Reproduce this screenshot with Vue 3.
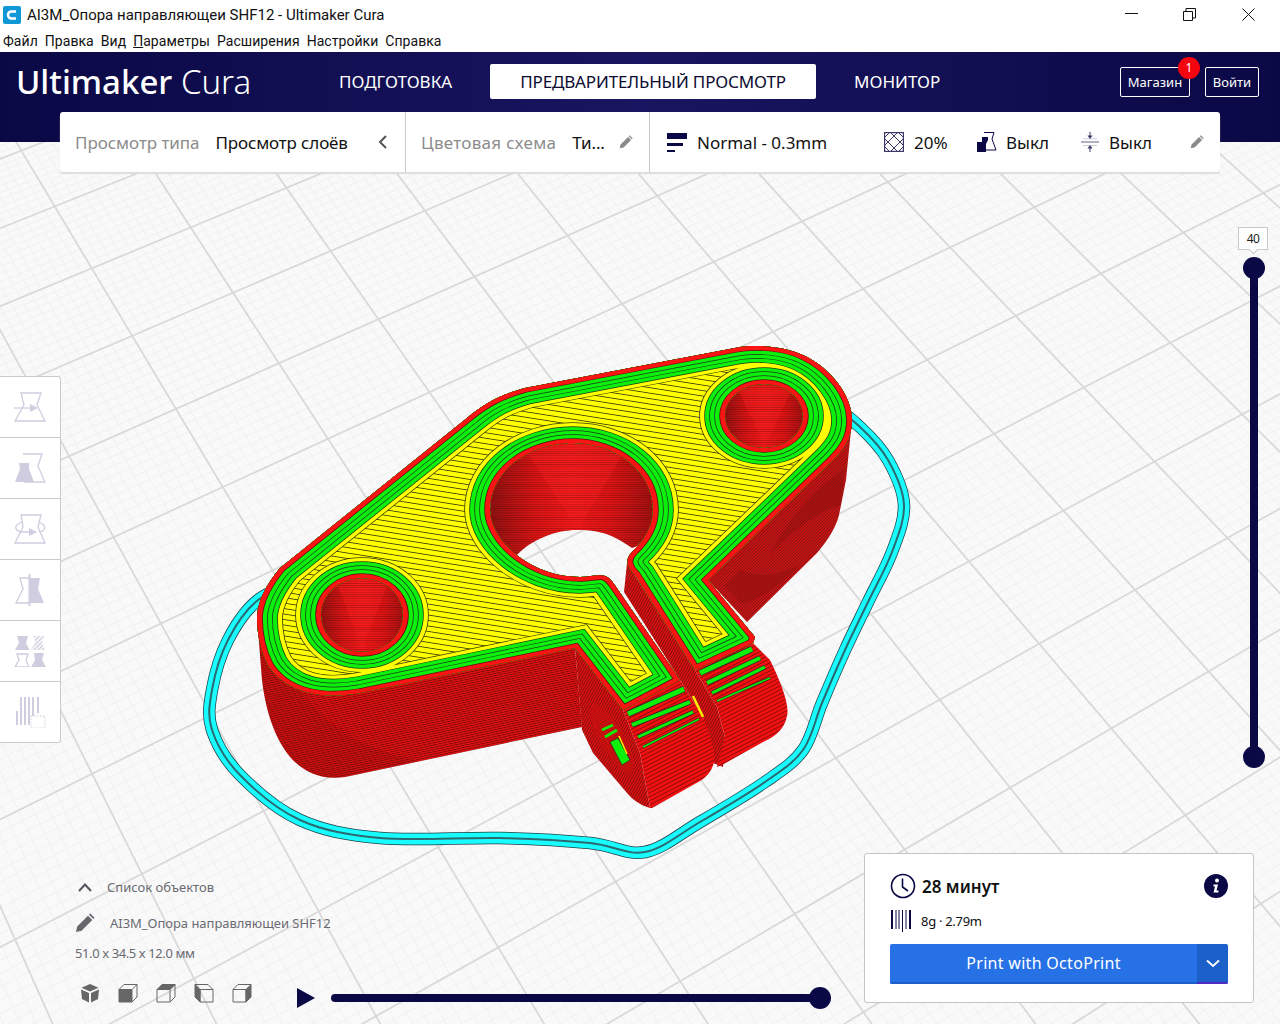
<template>
  <div class="page">
    <div class="titlebar">
      <svg class="app-icon" width="18" height="18" viewBox="0 0 18 18">
        <rect width="18" height="18" rx="2" fill="#0f97d6" />
        <path d="M13 5.500H8.500a3.500 3.500 0 0 0 0 7H13" fill="none" stroke="#fff" stroke-width="2.600" />
      </svg>
      <span class="title-text">AI3M_Опора направляющеи SHF12 - Ultimaker Cura</span>
      <div class="win-controls">
        <svg width="160" height="30" viewBox="0 0 160 30" fill="none" stroke="#111" stroke-width="1">
          <path d="M5 13.500H18" />
          <path d="M63.500 11.500h9v9h-9zM66 11V8.500h9.500V18H73" />
          <path d="M122.500 8.500l12 12M134.500 8.500l-12 12" />
        </svg>
      </div>
    </div>
    <div class="menubar">
      <span>Файл</span><span>Правка</span><span>Вид</span><span><u>П</u>араметры</span><span>Расширения</span><span>Настройки</span><span>Справка</span>
    </div>

    <div class="header">
      <div class="logo"><b>Ultimaker</b> <i>Cura</i></div>
      <nav class="nav">
        <span class="nav-item">ПОДГОТОВКА</span>
        <span class="nav-item active">ПРЕДВАРИТЕЛЬНЫЙ ПРОСМОТР</span>
        <span class="nav-item">МОНИТОР</span>
      </nav>
      <div class="header-btns">
        <span class="hbtn shop">Магазин<em class="badge">1</em></span>
        <span class="hbtn login">Войти</span>
      </div>
    </div>

    <div class="viewport">
      <svg class="scene" width="1280" height="882" viewBox="0 142 1280 882">
        <defs>
          <pattern id="hatch" width="24" height="5.400" patternUnits="userSpaceOnUse" patternTransform="rotate(9)">
            <rect width="24" height="5.400" fill="#ffff00" />
            <rect width="24" height="0.9" fill="#4a4a08" />
          </pattern>
          <pattern id="wallA" width="8" height="2.200" patternUnits="userSpaceOnUse" patternTransform="rotate(-12)">
            <rect width="8" height="2.200" fill="#e41010" />
            <rect width="8" height="0.9" fill="#800c0c" />
          </pattern>
          <pattern id="wallB" width="8" height="2.200" patternUnits="userSpaceOnUse" patternTransform="rotate(-44)">
            <rect width="8" height="2.200" fill="#c81414" />
            <rect width="8" height="0.7" fill="#801010" />
          </pattern>
          <pattern id="wallC" width="8" height="3.600" patternUnits="userSpaceOnUse" patternTransform="rotate(-27)">
            <rect width="8" height="3.600" fill="#f41010" />
            <rect width="8" height="0.9" fill="#8a0c0c" />
          </pattern>
          <pattern id="wallD" width="8" height="2.400" patternUnits="userSpaceOnUse" patternTransform="rotate(-60)">
            <rect width="8" height="2.400" fill="#d81212" />
            <rect width="8" height="0.8" fill="#800c0c" />
          </pattern>
          <pattern id="holeLines" width="8" height="2.200" patternUnits="userSpaceOnUse">
            <rect width="8" height="0.8" fill="#500808" opacity="0.4" />
          </pattern>
          <pattern id="toolHatch" width="3" height="3" patternUnits="userSpaceOnUse" patternTransform="rotate(-45)">
            <rect width="3" height="1.500" fill="#cfcddf" />
          </pattern>
          <linearGradient id="holeShade" x1="0" y1="0" x2="1" y2="0">
            <stop offset="0" stop-color="#8e1010" />
            <stop offset="0.28" stop-color="#dc1414" />
            <stop offset="0.5" stop-color="#f81a1a" />
            <stop offset="0.74" stop-color="#e01414" />
            <stop offset="1" stop-color="#a01010" />
          </linearGradient>
          <clipPath id="faceClip">
            <path :d="facePath" clip-rule="evenodd" />
          </clipPath>
        </defs>

        <!-- build plate -->
        <g fill="none">
          <path :d="gridMinor" stroke="#f1f1f1" stroke-width="1" />
          <path :d="gridMajor" stroke="#d9d9d9" stroke-width="1.800" />
        </g>

        <!-- skirt -->
        <g fill="none">
          <path :d="skirtPath" stroke="#1d3f45" stroke-width="12.500" />
          <path :d="skirtPath" stroke="#18fcff" stroke-width="11" />
          <path :d="skirtPath" stroke="#2a6a70" stroke-width="2" />
        </g>

        <!-- walls -->
        <path d="M708 580L852 420L846 480L840 510C838 525 828 540 817 553L747 622Z" fill="url(#wallB)" />
        <path d="M845 468L841 505C825 510 800 522 770 555C790 515 820 485 845 468ZM800 565C780 585 760 600 742 604L724 586L740 570C760 578 780 575 800 565Z" fill="#7a0c0c" opacity="0.3" />
        <path d="M257 617L262 680C268 730 290 785 345 777L582 727L575 648L360 693C320 700 285 690 262 650Z" fill="url(#wallA)" />
        <path d="M257 617L262 680C268 730 290 785 345 777L420 761C360 750 300 720 262 620Z" fill="#7a0c0c" opacity="0.18" />
        <path d="M627 563L624 592L642 620L680 680L703 717L713 763L723 767L725 737L717 707L695 670Z" fill="url(#wallD)" />
        <path d="M575 648L623 710L640 753L650 808C640 805 633 800 627 793L593 753L582 730Z" fill="url(#wallD)" />
        <path d="M623 710L680 680L703 717C710 735 716 752 714 762C712 772 705 778 700 781L652 808L650 808L640 753Z" fill="url(#wallC)" />
        <path d="M695 670L753 643L770 660C780 680 790 705 787 716C785 728 775 737 765 741L722 765L717 767L725 737L717 707Z" fill="url(#wallC)" />
        <path d="M693 696L703 717" stroke="#ffee00" stroke-width="2.500" />
        <path v-for="s in jawStripes" :key="s.d" :d="s.d" fill="none" stroke="#2a2a2a" :stroke-width="s.w + 1.400" />
        <path v-for="s in jawStripes" :key="'g' + s.d" :d="s.d" fill="none" stroke="#0cf00c" :stroke-width="s.w" />

        <!-- cross hole in the left jaw -->
        <ellipse cx="612" cy="739" rx="12" ry="39" transform="rotate(-30 612 739)" fill="#d81010" />
        <ellipse cx="612" cy="739" rx="12" ry="39" transform="rotate(-30 612 739)" fill="url(#holeLines)" />
        <path d="M602 730L613 725M605 737L617 730" stroke="#0cf00c" stroke-width="3" />
        <path d="M610 742L618 738L630 760L622 765Z" fill="#0cf00c" stroke="#222" stroke-width="0.700" />
        <path d="M619 736L627 754" stroke="#ffee00" stroke-width="1.500" />

        <!-- hole walls -->
        <path :d="mainHoleWall" fill="url(#holeShade)" />
        <path d="M520 442H630L578 530Z" fill="#ff2020" opacity="0.5" />
        <path :d="mainHoleWall" fill="url(#holeLines)" />
        <ellipse cx="362" cy="617" rx="44" ry="40" fill="url(#holeShade)" />
        <path d="M335 578H390L362 650Z" fill="#ff2020" opacity="0.5" />
        <ellipse cx="362" cy="617" rx="44" ry="40" fill="url(#holeLines)" />
        <ellipse cx="764" cy="416" rx="41" ry="34" fill="url(#holeShade)" />
        <path d="M735 383H795L765 446Z" fill="#ff2020" opacity="0.5" />
        <ellipse cx="764" cy="416" rx="41" ry="34" fill="url(#holeLines)" />

        <!-- top layer -->
        <path :d="facePath" fill="url(#hatch)" fill-rule="evenodd" />
        <g clip-path="url(#faceClip)">
          <g transform="scale(1 0.8)">
            <path v-for="l in perimeters" :key="l.w" :d="faceStretched" fill="none" :stroke="l.c" :stroke-width="l.w" stroke-linejoin="miter" />
          </g>
        </g>
      </svg>

      <!-- tool column -->
      <div class="tools">
        <div class="tool">
          <svg width="32" height="32" viewBox="0 0 32 32" fill="none" stroke="#cfcddf" stroke-width="1.300">
            <path d="M7 2H27L23 14L31 30H1L10 14Z" />
            <path d="M0 17H18" />
            <path d="M16 13L24 17L16 21Z" fill="#cfcddf" stroke="none" />
          </svg>
        </div>
        <div class="tool">
          <svg width="32" height="32" viewBox="0 0 32 32" fill="none" stroke="#cfcddf" stroke-width="1.300">
            <path d="M9 2H28L24 14L31 30H10" />
            <path d="M5 11H15L15 17L20 30H1L6 17Z" fill="#cfcddf" stroke="none" />
          </svg>
        </div>
        <div class="tool">
          <svg width="32" height="32" viewBox="0 0 32 32" fill="none" stroke="#cfcddf" stroke-width="1.300">
            <path d="M7 2H27L24 14L31 30H1L9 14Z" />
            <path d="M8 9C-2 13 1 19 10 19H16M25 9C34 13 31 18 25 19" />
            <path d="M15 15L23 19L15 23Z" fill="#cfcddf" stroke="none" />
          </svg>
        </div>
        <div class="tool">
          <svg width="32" height="32" viewBox="0 0 32 32" fill="none" stroke="#cfcddf" stroke-width="1.300">
            <path d="M16 4H6L9 15L2 29H16" />
            <path d="M16 4H26L24 15L30 29H16Z" fill="#cfcddf" stroke="none" />
            <path d="M15.500 0V32" stroke-width="2" />
          </svg>
        </div>
        <div class="tool">
          <svg width="32" height="32" viewBox="0 0 32 32" fill="none" stroke="#cfcddf" stroke-width="1">
            <path d="M3 1H14L12 8L15.500 15H1L5 8Z" fill="#cfcddf" stroke="none" />
            <path d="M20 1H30L28 8L31 15H17L21 8Z" fill="url(#toolHatch)" stroke="none" />
            <path d="M3 19H14L12 25L15 32H1L5 25Z" stroke-width="1.300" />
            <path d="M20 18H30L28 25L32 32H17L21 25Z" fill="#cfcddf" stroke="none" />
          </svg>
        </div>
        <div class="tool">
          <svg width="32" height="32" viewBox="0 0 32 32" fill="none" stroke="#cfcddf" stroke-width="2">
            <path d="M3 29V15M7 29V1M11 29V1M15 29V1M19 29V1M24 17V1" />
            <rect x="17" y="20" width="14" height="12" fill="#fff" stroke-width="1" stroke-dasharray="1.500 1.500" />
          </svg>
        </div>
      </div>

      <!-- layer slider -->
      <div class="layer-slider">
        <div class="layer-label">40</div>
        <div class="layer-track">
          <span class="knob top"></span>
          <span class="knob bottom"></span>
        </div>
      </div>

      <!-- object info -->
      <div class="objects">
        <div class="obj-row list">
          <svg width="16" height="10" viewBox="0 0 16 10" fill="none" stroke="#55555f" stroke-width="2">
            <path d="M2 9L8 2.500L14 9" />
          </svg>
          <span>Список объектов</span>
        </div>
        <div class="obj-row name">
          <svg width="20" height="20" viewBox="0 0 20 20" fill="#66666c">
            <path d="M1 19l1.200-5.500L13 2.700l4.300 4.300L6.500 17.800zM14 1.700l1.300-1.200 4.200 4.200-1.200 1.300z" />
          </svg>
          <span>AI3M_Опора направляющеи SHF12</span>
        </div>
        <div class="dims">51.0 x 34.5 x 12.0 мм</div>
        <div class="view-cubes">
          <svg width="20" height="20" viewBox="0 0 20 20" fill="#666">
            <path d="M10 1L18.500 4.800L10 8.500L1.500 4.800ZM1 6.500L9 10V19.500L2 16ZM19 6.500L11 10V19.500L18 16Z" />
          </svg>
          <svg width="20" height="20" viewBox="0 0 20 20" fill="none" stroke="#666">
            <path d="M1 6.500H14V19H1Z" fill="#666" />
            <path d="M1 6.500L6 1.500H19V14L14 19M14 6.500L19 1.500" />
          </svg>
          <svg width="20" height="20" viewBox="0 0 20 20" fill="none" stroke="#666">
            <path d="M1 6.500L6 1.500H19L14 6.500Z" fill="#666" />
            <path d="M1 6.500H14V19H1ZM14 6.500L19 1.500V14L14 19" />
          </svg>
          <svg width="20" height="20" viewBox="0 0 20 20" fill="none" stroke="#666">
            <path d="M1 1.500L6 6.500V19L1 14Z" fill="#666" />
            <path d="M1 1.500H14L19 6.500V19H6V6.500H19" />
          </svg>
          <svg width="20" height="20" viewBox="0 0 20 20" fill="none" stroke="#666">
            <path d="M14 6.500L19 1.500V14L14 19Z" fill="#666" />
            <path d="M1 6.500H14V19H1ZM1 6.500L6 1.500H19" />
          </svg>
        </div>
      </div>

      <!-- simulation slider -->
      <div class="sim">
        <svg width="18" height="20" viewBox="0 0 18 20"><path d="M0 0L18 10L0 20Z" fill="#0a0845" /></svg>
        <div class="sim-track"><span class="sim-knob"></span></div>
      </div>

      <!-- print panel -->
      <div class="print-panel">
        <div class="panel-top">
          <svg width="26" height="26" viewBox="0 0 26 26" fill="none" stroke="#0a0845" stroke-width="1.600">
            <circle cx="13" cy="13" r="11.500" />
            <path d="M12.500 5.500V14L18 18" />
          </svg>
          <span class="time">28 минут</span>
          <svg class="info" width="24" height="24" viewBox="0 0 24 24">
            <circle cx="12" cy="12" r="12" fill="#0a0845" />
            <circle cx="13" cy="6.500" r="2" fill="#fff" />
            <path d="M9.500 10.500H14L12.500 16.500H14.500V18.500H9.500L11 12.500H9.500Z" fill="#fff" />
          </svg>
        </div>
        <div class="panel-mat">
          <svg width="21" height="23" viewBox="0 0 21 23" stroke="#0a0845" fill="none">
            <path d="M2 1V20M20 1V20" stroke-width="2" />
            <path d="M6 1V20M9 1V20M12.500 1V23M16 1V20" stroke-width="1" />
          </svg>
          <span>8g · 2.79m</span>
        </div>
        <div class="print-btn">
          <span class="print-main">Print with OctoPrint</span>
          <span class="print-more">
            <svg width="14" height="9" viewBox="0 0 14 9" fill="none" stroke="#fff" stroke-width="2">
              <path d="M1 1.500L7 7L13 1.500" />
            </svg>
          </span>
        </div>
      </div>
    </div>

    <!-- top toolbar -->
    <div class="toolbar">
      <div class="tb-sec first">
        <span class="tb-label">Просмотр типа</span>
        <span class="tb-value">Просмотр слоёв</span>
        <svg class="tb-chevron" width="10" height="14" viewBox="0 0 10 14" fill="none" stroke="#555" stroke-width="2">
          <path d="M8 1L2 7L8 13" />
        </svg>
      </div>
      <div class="tb-sec second">
        <span class="tb-label wide">Цветовая схема</span>
        <span class="tb-value">Ти...</span>
        <svg class="tb-pencil" width="14" height="14" viewBox="0 0 20 20" fill="#8a8a8a">
          <path d="M1 19l1.200-5.500L13 2.700l4.300 4.300L6.500 17.800zM14 1.700l1.300-1.200 4.200 4.200-1.200 1.300z" />
        </svg>
      </div>
      <div class="tb-sec third">
        <div class="tb-item profile">
          <svg width="20" height="20" viewBox="0 0 20 20" fill="#0a0845">
            <path d="M0 1H20V7H0ZM0 11H16V14H0ZM0 18H8V20H0Z" />
          </svg>
          <span>Normal - 0.3mm</span>
        </div>
        <div class="tb-item infill">
          <svg width="20" height="20" viewBox="0 0 20 20" fill="none" stroke="#3a3a6a" stroke-width="1">
            <rect x="0.500" y="0.500" width="19" height="19" stroke-width="1.400" />
            <path d="M0 6L6 0M0 14L14 0M6 20L20 6M14 20L20 14M0 6L14 20M0 14L6 20M6 0L20 14M14 0L20 6" />
          </svg>
          <span>20%</span>
        </div>
        <div class="tb-item support">
          <svg width="20" height="20" viewBox="0 0 20 20" fill="none" stroke="#0a0845" stroke-width="1">
            <path d="M7 0.500H17L15 7L19 18H9" />
            <path d="M0 10H5V5H11V8L9 12V20H0Z" fill="#0a0845" stroke="none" />
          </svg>
          <span>Выкл</span>
        </div>
        <div class="tb-item adhesion">
          <svg width="18" height="20" viewBox="0 0 18 20" fill="#3a3a6a">
            <path d="M0 9.500H18V10.500H0Z" opacity="0.8" />
            <path d="M2 6.500H16V7.200H2ZM2 13H16V13.700H2Z" opacity="0.35" />
            <path d="M9 7L6.500 3.500H8.500V0H9.500V3.500H11.500ZM9 13L6.500 16.500H8.500V20H9.500V16.500H11.500Z" />
          </svg>
          <span>Выкл</span>
        </div>
        <svg class="tb-pencil last" width="14" height="14" viewBox="0 0 20 20" fill="#8a8a8a">
          <path d="M1 19l1.200-5.500L13 2.700l4.300 4.300L6.500 17.800zM14 1.700l1.300-1.200 4.200 4.200-1.200 1.300z" />
        </svg>
      </div>
    </div>
  </div>
</template>

<script setup>
// plate grid, two families of lines running to their vanishing points
const VA = [-1389, -2205]
const VB = [6220, -2265]

function lineA(x860) {
  const s = (x860 - VA[0]) / (860 - VA[1])
  return `M${(x860 + s * (100 - 860)).toFixed(1)} 100L${(x860 + s * (1100 - 860)).toFixed(1)} 1100`
}
function lineB(k) {
  const y = 487 + 103 * k + 4 * k * k
  const s = (y - VB[1]) / (223 - VB[0])
  return `M-50 ${(y + s * (-50 - 223)).toFixed(1)}L1330 ${(y + s * (1330 - 223)).toFixed(1)}`
}

let major = ''
let minor = ''
for (let i = -120; i <= 130; i++) {
  const d = lineA(135 + 15.55 * i)
  if (i % 10 === 0) major += d
  else minor += d
}
for (let i = -70; i <= 110; i++) {
  const d = lineB(i / 10)
  if (i % 10 === 0) major += d
  else minor += d
}
const gridMajor = major
const gridMinor = minor

function smooth(pts) {
  const n = pts.length
  let d = `M${pts[0][0]} ${pts[0][1]}`
  for (let i = 0; i < n; i++) {
    const p0 = pts[(i - 1 + n) % n]
    const p1 = pts[i]
    const p2 = pts[(i + 1) % n]
    const p3 = pts[(i + 2) % n]
    d += `C${p1[0] + (p2[0] - p0[0]) / 6} ${p1[1] + (p2[1] - p0[1]) / 6} ${p2[0] - (p3[0] - p1[0]) / 6} ${p2[1] - (p3[1] - p1[1]) / 6} ${p2[0]} ${p2[1]}`
  }
  return d + 'Z'
}

const skirtPath = smooth([
  [800, 410], [832, 408], [860, 427], [888, 460], [904, 505], [892, 552], [868, 602], [845, 650],
  [822, 703], [803, 750], [765, 782], [700, 822], [645, 852], [590, 843], [500, 838], [380, 838],
  [300, 820], [240, 775], [212, 730], [212, 690], [228, 640], [258, 600], [310, 575], [500, 480]
])

function ell(cx, cy, rx, ry) {
  const k = 0.5523
  return `M${cx - rx} ${cy}C${cx - rx} ${cy - ry * k} ${cx - rx * k} ${cy - ry} ${cx} ${cy - ry}` +
    `C${cx + rx * k} ${cy - ry} ${cx + rx} ${cy - ry * k} ${cx + rx} ${cy}` +
    `C${cx + rx} ${cy + ry * k} ${cx + rx * k} ${cy + ry} ${cx} ${cy + ry}` +
    `C${cx - rx * k} ${cy + ry} ${cx - rx} ${cy + ry * k} ${cx - rx} ${cy}Z`
}

const outline =
  'M257 617C258 600 266 585 280 568L467 418C485 403 500 395 525 388L735 348C755 344 785 346 805 356' +
  'C830 368 852 395 852 420C852 437 845 448 833 460L708 580L755 637L753 643L695 670L635 575' +
  'C625 565 626 558 632 552C645 540 653 525 653 510C653 470 615 443 573 443C530 443 490 470 490 510' +
  'C490 540 530 577 580 577C590 577 600 574 605 576C610 578 612 581 614 584L680 680L623 710L575 648' +
  'L360 693C320 700 285 692 268 665C260 650 257 632 257 617Z'

const facePath = outline + ell(362, 615, 41, 37) + ell(764, 416, 39, 32)
const faceStretched = facePath.replace(/(-?[\d.]+) (-?[\d.]+)/g, (m, x, y) => `${x} ${(y / 0.8).toFixed(2)}`)

const mainHoleWall = 'M488 510C488 470 530 441 573 441C615 441 655 470 655 510C655 530 645 545 632 548C610 532 595 530 577 530C555 530 530 540 515 557C500 545 488 530 488 510Z'

// inside lines of the wall, widest first because each one is half hidden by the clip
const perimeters = [
  { w: 51.6, c: '#3a3a08' },
  { w: 50, c: '#ffff00' },
  { w: 41.6, c: '#1c3a1c' },
  { w: 40, c: '#0cf00c' },
  { w: 31.6, c: '#1c3a1c' },
  { w: 30, c: '#0cf00c' },
  { w: 21.6, c: '#1c3a1c' },
  { w: 20, c: '#0cf00c' },
  { w: 11.6, c: '#5a1010' },
  { w: 10, c: '#fa1414' }
]

const jawStripes = [
  { d: 'M628 714L684 689', w: 5 },
  { d: 'M632 725L690 702', w: 4 },
  { d: 'M638 737L693 712', w: 3 },
  { d: 'M643 747L699 719', w: 1.5 },
  { d: 'M700 673L752 649', w: 5 },
  { d: 'M707 683L760 658', w: 4 },
  { d: 'M712 693L765 667', w: 3 },
  { d: 'M717 701L770 678', w: 1.5 }
]
</script>

<style scoped>
.page {
  position: relative;
  width: 1280px;
  height: 1024px;
  display: flex;
  flex-direction: column;
  overflow: hidden;
  background: #fff;
  font-family: "Noto Sans", sans-serif;
}
.titlebar {
  height: 30px;
  display: flex;
  align-items: center;
  padding-left: 3px;
  font-family: Roboto, "Noto Sans", sans-serif;
  font-size: 15px;
  color: #111;
}
.app-icon {
  margin-right: 6px;
}
.win-controls {
  margin-left: auto;
  height: 30px;
}
.menubar {
  height: 22px;
  display: flex;
  gap: 7px;
  padding-left: 3px;
  font-family: Roboto, "Noto Sans", sans-serif;
  font-size: 14px;
  letter-spacing: 0.05px;
  line-height: 22px;
  color: #111;
}
.header {
  height: 90px;
  display: flex;
  align-items: flex-start;
  padding-left: 16px;
  background: linear-gradient(90deg, #0a0845 0%, #191560 50%, #0a0845 100%);
  color: #fff;
}
.logo {
  width: 323px;
  font-size: 33px;
  line-height: 60px;
  white-space: nowrap;
}
.logo b {
  font-weight: 500;
}
.logo i {
  font-style: normal;
  font-weight: 300;
}
.nav {
  display: flex;
  align-items: center;
  height: 35px;
  margin-top: 12px;
  font-size: 17px;
}
.nav-item {
  padding: 0 38px 0 0;
}
.nav-item.active {
  width: 326px;
  height: 35px;
  line-height: 35px;
  padding: 0;
  margin-right: 38px;
  background: #fff;
  color: #0a0a30;
  text-align: center;
  letter-spacing: -0.15px;
  border-radius: 2px;
}
.header-btns {
  margin-left: auto;
  margin-right: 21px;
  margin-top: 15px;
  display: flex;
  gap: 15px;
  font-size: 13px;
}
.hbtn {
  position: relative;
  height: 30px;
  line-height: 28px;
  box-sizing: border-box;
  border: 1px solid #fff;
  border-radius: 2px;
  text-align: center;
}
.shop {
  width: 70px;
}
.login {
  width: 54px;
}
.badge {
  position: absolute;
  top: -11px;
  right: -11px;
  width: 22px;
  height: 22px;
  line-height: 22px;
  border-radius: 50%;
  background: #f5050f;
  font-style: normal;
  font-size: 12px;
}
.viewport {
  position: relative;
  flex: 1;
  background: #f9f9f9;
  overflow: hidden;
}
.scene {
  position: absolute;
  left: 0;
  top: 0;
}
.toolbar {
  position: absolute;
  left: 60px;
  top: 112px;
  width: 1160px;
  height: 60px;
  display: flex;
  background: #fff;
  border-radius: 3px;
  box-shadow: 0 2px 1px #dddddd;
  font-size: 17px;
  color: #111;
}
.tb-sec {
  display: flex;
  align-items: center;
  box-sizing: border-box;
  height: 60px;
}
.first {
  width: 346px;
  padding-left: 15px;
  border-right: 1px solid #c8c8c8;
}
.second {
  width: 244px;
  padding-left: 15px;
  border-right: 1px solid #c8c8c8;
}
.third {
  flex: 1;
  padding-left: 17px;
}
.tb-label {
  color: #8c8c8c;
  white-space: nowrap;
  letter-spacing: -0.05px;
}
.tb-label.wide {
  letter-spacing: 0.3px;
}
.tb-value {
  margin-left: 16px;
  white-space: nowrap;
  letter-spacing: -0.15px;
}
.tb-chevron {
  margin-left: 30px;
}
.tb-pencil {
  margin-left: 14px;
}
.tb-pencil.last {
  margin-left: 0;
}
.tb-item {
  display: flex;
  align-items: center;
}
.profile {
  width: 217px;
  gap: 10px;
}
.infill {
  width: 93px;
  gap: 10px;
}
.support {
  width: 104px;
  gap: 9px;
}
.adhesion {
  width: 109px;
  gap: 10px;
}
.tools {
  position: absolute;
  left: 0;
  top: 234px;
  width: 61px;
  box-sizing: border-box;
  background: #fff;
  border: 1px solid #cbcbcb;
  border-left: none;
  border-radius: 0 3px 3px 0;
}
.tool {
  height: 61px;
  display: flex;
  align-items: center;
  justify-content: center;
  box-sizing: border-box;
  border-bottom: 1px solid #cbcbcb;
}
.tool:last-child {
  height: 60px;
  border-bottom: none;
}
.layer-slider {
  position: absolute;
  left: 1238px;
  top: 85px;
  width: 30px;
  display: flex;
  flex-direction: column;
  align-items: center;
}
.layer-label {
  position: relative;
  width: 30px;
  height: 23px;
  box-sizing: border-box;
  border: 1px solid #c8c8c8;
  background: #fff;
  font-size: 12px;
  letter-spacing: -0.5px;
  line-height: 21px;
  text-align: center;
  color: #222;
}
.layer-label::after {
  content: "";
  position: absolute;
  left: 11px;
  bottom: -4px;
  width: 6px;
  height: 6px;
  background: #fff;
  border-right: 1px solid #c8c8c8;
  border-bottom: 1px solid #c8c8c8;
  transform: rotate(45deg);
}
.layer-track {
  position: relative;
  width: 8px;
  height: 489px;
  margin-top: 18px;
  margin-left: 2px;
  background: #0a0845;
}
.knob {
  position: absolute;
  left: -7px;
  width: 22px;
  height: 22px;
  border-radius: 50%;
  background: #0a0845;
}
.knob.top {
  top: -11px;
}
.knob.bottom {
  bottom: -11px;
}
.objects {
  position: absolute;
  left: 75px;
  top: 735px;
  font-size: 13px;
  color: #6a6a72;
}
.obj-row {
  display: flex;
  align-items: center;
}
.list {
  height: 20px;
  gap: 14px;
  padding-left: 2px;
}
.name {
  height: 20px;
  margin-top: 16px;
  gap: 15px;
  letter-spacing: -0.03px;
}
.dims {
  margin-top: 10px;
  height: 20px;
  line-height: 20px;
  letter-spacing: -0.4px;
}
.view-cubes {
  display: flex;
  gap: 18px;
  margin-top: 20px;
  padding-left: 5px;
}
.sim {
  position: absolute;
  left: 297px;
  top: 846px;
  display: flex;
  align-items: center;
  gap: 16px;
}
.sim-track {
  position: relative;
  width: 489px;
  height: 8px;
  border-radius: 4px;
  background: #0a0845;
}
.sim-knob {
  position: absolute;
  right: -11px;
  top: -7px;
  width: 22px;
  height: 22px;
  border-radius: 50%;
  background: #0a0845;
}
.print-panel {
  position: absolute;
  left: 864px;
  top: 711px;
  width: 390px;
  height: 150px;
  box-sizing: border-box;
  padding: 19px 25px 0;
  background: #fff;
  border: 1px solid #c4c4c4;
  border-radius: 3px;
}
.panel-top {
  display: flex;
  align-items: center;
  gap: 6px;
  height: 26px;
}
.time {
  font-size: 17px;
  font-weight: 600;
  color: #111;
}
.info {
  margin-left: auto;
}
.panel-mat {
  display: flex;
  align-items: center;
  gap: 10px;
  height: 23px;
  margin-top: 10px;
  margin-bottom: 1px;
  font-size: 13px;
  letter-spacing: -0.3px;
  color: #111;
}
.print-btn {
  display: flex;
  height: 40px;
  margin-top: 12px;
  border-radius: 2px;
  overflow: hidden;
  color: #fff;
  font-size: 16px;
}
.print-main {
  flex: 1;
  box-sizing: border-box;
  line-height: 38px;
  letter-spacing: 0.3px;
  text-align: center;
  background: #2671e6;
  border-bottom: 2px solid #1c5fc8;
}
.print-more {
  width: 31px;
  box-sizing: border-box;
  display: flex;
  align-items: center;
  justify-content: center;
  background: #1b5fc9;
  border-bottom: 2px solid #4f2ac4;
}
</style>

<style>
html,
body {
  margin: 0;
  background: #fff;
}
</style>
